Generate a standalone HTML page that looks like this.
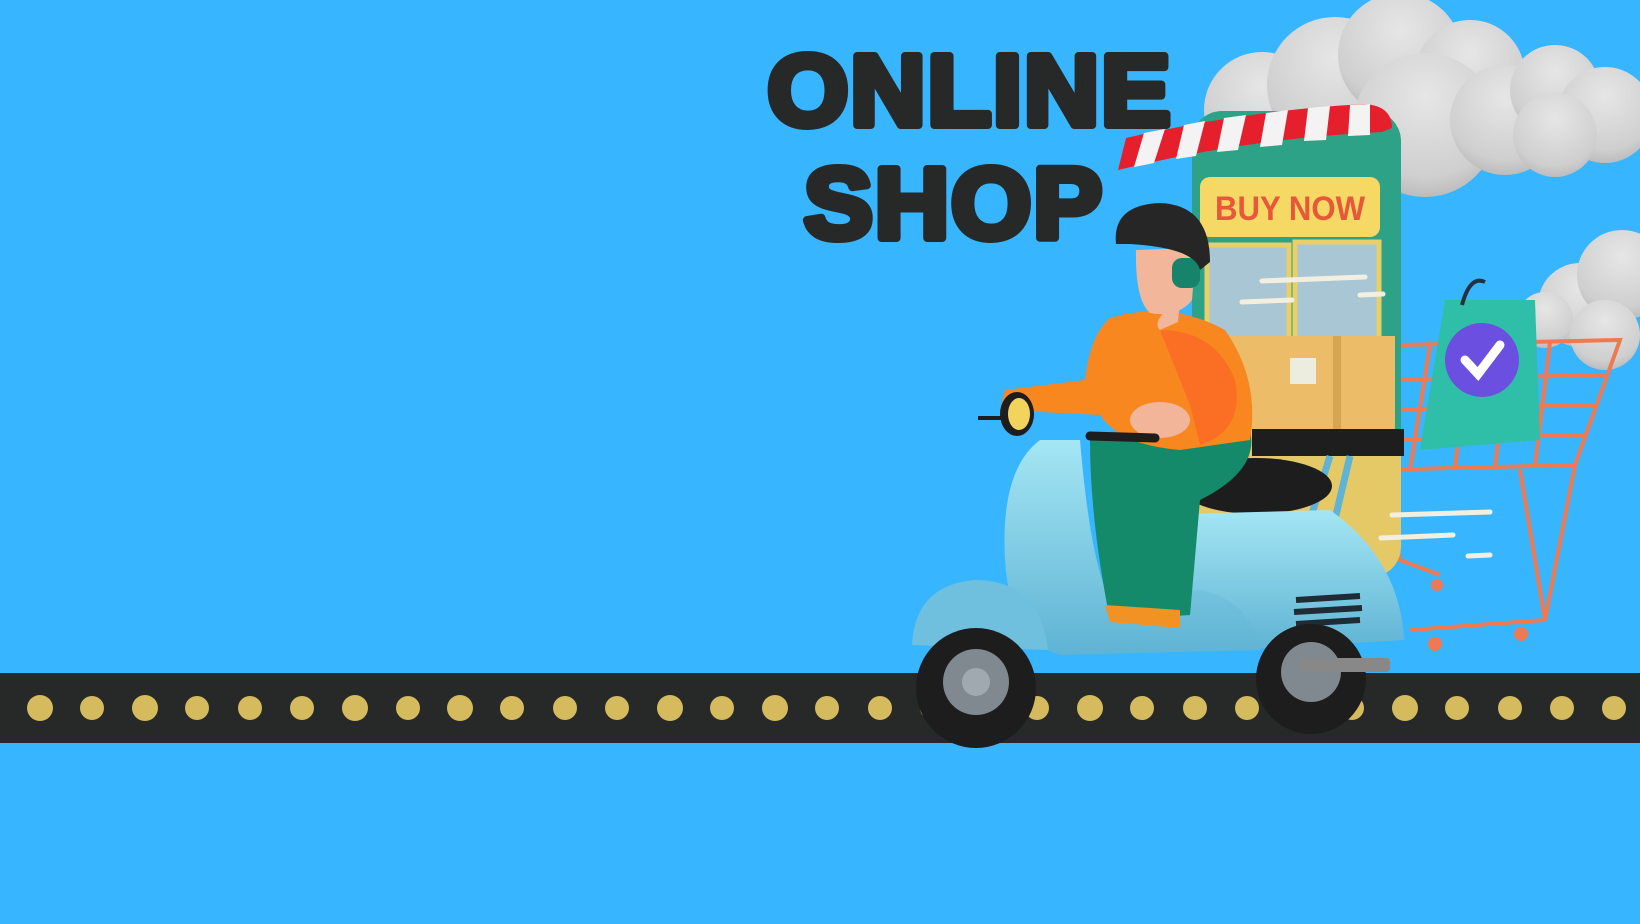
<!DOCTYPE html>
<html><head><meta charset="utf-8"><style>
html,body{margin:0;padding:0;width:1640px;height:924px;overflow:hidden;background:#38b5ff}
svg{display:block}
</style></head><body>
<svg width="1640" height="924" viewBox="0 0 1640 924" xmlns="http://www.w3.org/2000/svg">
<defs>
<radialGradient id="cl" cx="0.5" cy="0.3" r="0.75"><stop offset="0" stop-color="#e6e6e6"/><stop offset="0.75" stop-color="#cfcfcf"/><stop offset="1" stop-color="#b5b5b5"/></radialGradient>
<linearGradient id="sc" x1="0" y1="0" x2="0" y2="1"><stop offset="0" stop-color="#a4e6f4"/><stop offset="1" stop-color="#5fb3d4"/></linearGradient>
</defs>
<rect width="1640" height="924" fill="#38b5ff"/>
<!-- clouds -->
<g fill="url(#cl)">
<circle cx="1262" cy="110" r="58"/><circle cx="1335" cy="85" r="68"/><circle cx="1400" cy="55" r="62"/><circle cx="1470" cy="75" r="55"/>
<circle cx="1425" cy="125" r="72"/><circle cx="1505" cy="120" r="55"/><circle cx="1555" cy="90" r="45"/><circle cx="1605" cy="115" r="48"/>
<circle cx="1555" cy="135" r="42"/>
<circle cx="1580" cy="305" r="42"/><circle cx="1622" cy="275" r="45"/><circle cx="1545" cy="320" r="28"/><circle cx="1605" cy="335" r="35"/>
</g>
<!-- title -->
<g font-family="'Liberation Sans',sans-serif" font-weight="900" fill="#262927" stroke="#262927" stroke-width="8" stroke-linejoin="round">
<text x="970" y="125" font-size="100" text-anchor="middle" letter-spacing="2" textLength="405" lengthAdjust="spacingAndGlyphs">ONLINE</text>
<text x="954" y="238" font-size="100" text-anchor="middle" letter-spacing="2" textLength="300" lengthAdjust="spacingAndGlyphs">SHOP</text>
</g>
<!-- stripe -->
<rect x="0" y="673" width="1640" height="70" fill="#272928"/>
<g fill="#d5bb5e">
<circle cx="40" cy="708" r="13"/><circle cx="92" cy="708" r="12"/><circle cx="145" cy="708" r="13"/><circle cx="197" cy="708" r="12"/><circle cx="250" cy="708" r="12"/><circle cx="302" cy="708" r="12"/><circle cx="355" cy="708" r="13"/><circle cx="408" cy="708" r="12"/><circle cx="460" cy="708" r="13"/><circle cx="512" cy="708" r="12"/><circle cx="565" cy="708" r="12"/><circle cx="617" cy="708" r="12"/><circle cx="670" cy="708" r="13"/><circle cx="722" cy="708" r="12"/><circle cx="775" cy="708" r="13"/><circle cx="827" cy="708" r="12"/><circle cx="880" cy="708" r="12"/><circle cx="932" cy="708" r="12"/><circle cx="985" cy="708" r="12"/><circle cx="1037" cy="708" r="12"/><circle cx="1090" cy="708" r="13"/><circle cx="1142" cy="708" r="12"/><circle cx="1195" cy="708" r="12"/><circle cx="1247" cy="708" r="12"/><circle cx="1300" cy="708" r="12"/><circle cx="1352" cy="708" r="12"/><circle cx="1405" cy="708" r="13"/><circle cx="1457" cy="708" r="12"/><circle cx="1510" cy="708" r="12"/><circle cx="1562" cy="708" r="12"/><circle cx="1614" cy="708" r="12"/>
</g>
<!-- cart -->
<g stroke="#ef7a52" stroke-width="4" fill="none">
<path d="M1400 345 L1620 340 L1575 465 L1370 470 Z"/>
<path d="M1380 380 L1605 375 M1378 410 L1595 405 M1375 440 L1585 435"/>
<path d="M1430 345 L1410 470 M1470 344 L1455 468 M1510 343 L1495 467 M1550 342 L1535 466"/>
<path d="M1575 465 L1545 620 L1410 630 M1545 620 L1520 470 M1380 470 L1400 560 L1440 575"/>
</g>
<g fill="#ef7a52"><circle cx="1437" cy="585" r="6"/><circle cx="1435" cy="644" r="7"/><circle cx="1521" cy="634" r="7"/></g>
<!-- bag -->
<path d="M1445 300 L1535 300 L1540 440 L1420 450 Z" fill="#2fbfa8"/>
<path d="M1462 305 Q1470 275 1485 282" stroke="#263040" stroke-width="4" fill="none"/>
<circle cx="1482" cy="360" r="37" fill="#6a4fe0"/>
<path d="M1465 360 L1478 374 L1500 345" stroke="#fff" stroke-width="9" fill="none" stroke-linecap="round"/>
<!-- phone -->
<rect x="1192" y="111" width="209" height="466" rx="30" fill="#2da287"/>
<rect x="1192" y="420" width="209" height="157" rx="30" fill="#e6c967"/>
<rect x="1200" y="177" width="180" height="60" rx="10" fill="#f6d865"/>
<text x="1290" y="220" font-family="'Liberation Sans',sans-serif" font-weight="900" font-size="34" fill="#e8573a" text-anchor="middle" textLength="150" lengthAdjust="spacingAndGlyphs">BUY NOW</text>
<rect x="1207" y="245" width="82" height="100" fill="#a9c6d4" stroke="#e9cf68" stroke-width="5"/>
<rect x="1295" y="242" width="84" height="103" fill="#a9c6d4" stroke="#e9cf68" stroke-width="5"/>
<g stroke="#f3efe0" stroke-width="5" stroke-linecap="round"><path d="M1262 281 L1365 277 M1242 302 L1292 300 M1360 295 L1383 294 M1392 515 L1490 512 M1381 538 L1453 535 M1468 556 L1490 555"/></g>
<!-- awning -->
<path d="M1118 170 L1126 138 Q1250 110 1365 104 Q1392 106 1392 128 L1382 132 Q1250 138 1118 170 Z" fill="#e61f2d"/>
<g fill="#f3f3f3"><path d="M1144 133 L1165 129 L1154 163 L1134 167 Z"/><path d="M1184 125 L1205 121 L1196 156 L1176 159 Z"/><path d="M1224 118 L1246 115 L1238 150 L1217 152 Z"/><path d="M1266 113 L1288 110 L1282 145 L1260 147 Z"/><path d="M1308 108 L1330 106 L1326 140 L1304 141 Z"/><path d="M1350 105 L1370 104 L1370 135 L1348 136 Z"/></g>
<!-- box & rack -->
<rect x="1230" y="336" width="165" height="100" fill="#edbc68"/>
<rect x="1333" y="336" width="8" height="100" fill="#d6a552"/>
<rect x="1290" y="358" width="26" height="26" fill="#ececdf"/>
<rect x="1252" y="429" width="152" height="27" fill="#1e1e1e"/>
<path d="M1330 456 L1310 520 M1350 456 L1330 540" stroke="#5fb3d4" stroke-width="7"/>
<!-- scooter -->
<ellipse cx="1256" cy="486" rx="76" ry="28" fill="#1d1d1d"/>
<path d="M1180 514 L1330 510 Q1400 560 1404 640 L1240 650 Q1180 620 1180 514 Z" fill="url(#sc)"/>
<path d="M1040 440 Q1000 470 1005 560 Q1010 640 1060 655 L1260 650 Q1250 600 1200 590 L1110 600 Q1090 560 1080 440 Z" fill="url(#sc)"/>
<path d="M912 645 Q915 585 975 580 Q1040 580 1048 650 Z" fill="#6fc0de"/>
<path d="M1296 600 L1360 596 M1294 612 L1362 608 M1296 624 L1360 620" stroke="#1f2b35" stroke-width="6"/>
<circle cx="976" cy="688" r="60" fill="#1d1d1d"/><circle cx="976" cy="682" r="33" fill="#808890"/><circle cx="976" cy="682" r="14" fill="#a0a8b0"/>
<circle cx="1311" cy="679" r="55" fill="#1d1d1d"/><circle cx="1311" cy="672" r="30" fill="#808890"/>
<rect x="1300" y="658" width="90" height="14" fill="#888" rx="4"/>
<!-- person -->
<path d="M1090 440 L1250 430 Q1260 470 1200 500 L1190 615 L1110 620 Q1090 520 1090 440 Z" fill="#148a6a"/>
<path d="M1105 605 L1180 610 L1180 628 L1110 622 Z" fill="#f39224"/>
<path d="M1110 318 Q1170 300 1225 330 Q1260 380 1250 440 L1180 450 Q1120 445 1100 415 L1000 410 L1005 390 L1085 380 Q1090 335 1110 318 Z" fill="#f7871e"/>
<path d="M1160 330 Q1215 330 1235 380 Q1245 430 1200 445 L1190 405 Z" fill="#fb6f24"/>
<ellipse cx="1160" cy="420" rx="30" ry="18" fill="#f3b59a"/>
<path d="M1090 436 L1155 438" stroke="#1d1d1d" stroke-width="9" stroke-linecap="round"/>
<path d="M1180 300 Q1150 320 1160 330 L1178 322 Z" fill="#f2b79a"/>
<path d="M1136 250 Q1135 300 1150 313 Q1178 318 1192 300 L1196 248 Z" fill="#f2b79a"/>
<rect x="1172" y="258" width="28" height="30" rx="10" fill="#17836a"/>
<path d="M1116 244 Q1112 205 1160 203 Q1210 205 1210 262 L1200 270 Q1195 248 1130 244 Z" fill="#262626"/>
<path d="M978 418 L1030 418" stroke="#1d1d1d" stroke-width="4"/>
<ellipse cx="1017" cy="414" rx="17" ry="22" fill="#1d1d1d"/><ellipse cx="1019" cy="414" rx="11" ry="16" fill="#f2d35c"/>
</svg>
</body></html>
